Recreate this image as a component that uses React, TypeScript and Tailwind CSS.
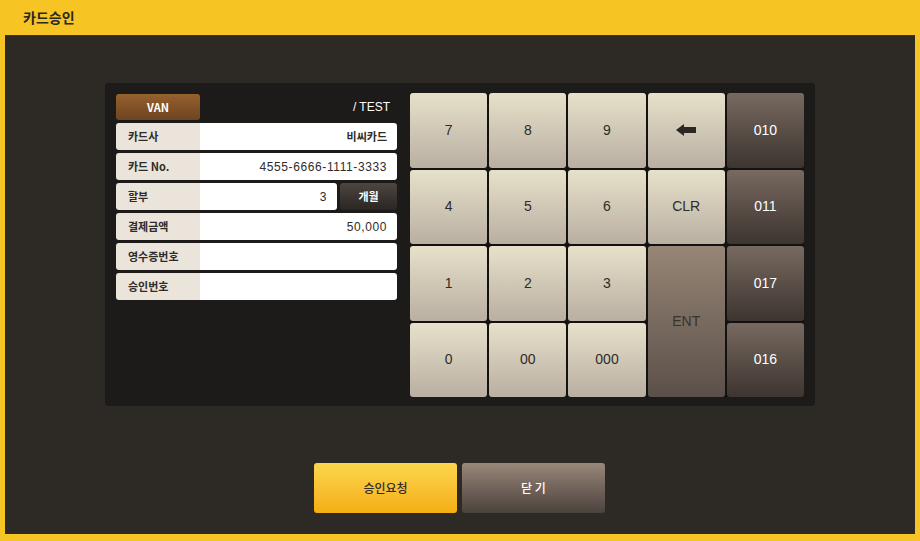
import React from "react"

const FONT = { fontFamily: '"Noto Sans CJK KR", "Noto Sans", sans-serif' }
const NUM = { fontFamily: '"Liberation Sans", "Noto Sans CJK KR", sans-serif' }

type Key = { label: React.ReactNode; kind: "light" | "dark" | "ent" }

const keys: Key[] = [
  { label: "7", kind: "light" },
  { label: "8", kind: "light" },
  { label: "9", kind: "light" },
  {
    label: (
      <svg width="20" height="12" viewBox="0 0 20 12">
        <polygon points="0,6 8,0 8,3 20,3 20,9 8,9 8,12" fill="#2b2724" />
      </svg>
    ),
    kind: "light",
  },
  { label: "010", kind: "dark" },
  { label: "4", kind: "light" },
  { label: "5", kind: "light" },
  { label: "6", kind: "light" },
  { label: "CLR", kind: "light" },
  { label: "011", kind: "dark" },
  { label: "1", kind: "light" },
  { label: "2", kind: "light" },
  { label: "3", kind: "light" },
  { label: "ENT", kind: "ent" },
  { label: "017", kind: "dark" },
  { label: "0", kind: "light" },
  { label: "00", kind: "light" },
  { label: "000", kind: "light" },
  { label: "016", kind: "dark" },
]

const keyStyle = {
  light: "bg-gradient-to-b from-[#e7e1c9] to-[#b9afa2] text-[#2f2b28]",
  dark: "bg-gradient-to-b from-[#786a60] to-[#3d3530] text-white",
  ent: "bg-gradient-to-b from-[#978676] to-[#5b5049] text-[#38322e] row-span-2",
}

const rows = [
  { label: "카드사", value: "비씨카드" },
  { label: "카드 No.", value: "4555-6666-1111-3333" },
  { label: "할부", value: "3", unit: true },
  { label: "결제금액", value: "50,000" },
  { label: "영수증번호", value: "" },
  { label: "승인번호", value: "" },
]

export default function App() {
  return (
    <div className="w-[920px] h-[541px] bg-[#f7c523] flex flex-col" style={FONT}>
      {/* HEADER */}
      <div className="h-[35px] flex items-center pl-[23px] text-[14px] font-bold text-[#2a2621]">
        카드승인
      </div>

      {/* BODY */}
      <div className="mx-[5px] h-[499px] bg-[#2d2a26] flex flex-col items-center border-t border-[#3a352c]">
        <div className="mt-[47px] w-[710px] h-[323px] bg-[#1d1b19] rounded-[3px] flex gap-[13px] pl-[11px] pt-[10px]">
          {/* LEFT FORM */}
          <div className="w-[281px] flex flex-col gap-[3px]">
            <div className="h-[26px] mt-[1px] flex items-center justify-between">
              <div className="w-[84px] h-[26px] rounded-[3px] bg-gradient-to-b from-[#96612f] to-[#6e4420] text-white text-[11px] font-bold flex items-center justify-center">
                VAN
              </div>
              <span className="text-[12px] text-white pr-[7px]" style={NUM}>/ TEST</span>
            </div>
            {rows.map((r) => {
              const numeric = /^[\d,-]+$/.test(r.value)
              return (
                <div key={r.label} className="h-[27px] flex gap-[3px]">
                  <div className="flex-1 flex rounded-[3px] overflow-hidden">
                    <div className="w-[84px] bg-[#ebe4da] text-[11px] font-semibold text-[#2f2b28] flex items-center pl-[12px]">
                      {r.label}
                    </div>
                    <div
                      className={`flex-1 bg-white text-[#2f2b28] flex items-center justify-end pr-[10px] ${
                        numeric ? "text-[12px] tracking-[0.6px]" : "text-[11px] font-semibold"
                      }`}
                      style={numeric ? NUM : undefined}
                    >
                      {r.value}
                    </div>
                  </div>
                  {r.unit && (
                    <div className="w-[57px] rounded-[3px] bg-gradient-to-b from-[#4d4540] to-[#2b2623] text-white text-[11px] font-semibold flex items-center justify-center">
                      개월
                    </div>
                  )}
                </div>
              )
            })}
          </div>

          {/* KEYPAD */}
          <div className="w-[394px] h-[304px] bg-[#141210] grid grid-cols-5 grid-rows-4 gap-[2px]">
            {keys.map((k, i) => (
              <div
                key={i}
                className={`rounded-[3px] flex items-center justify-center text-[14px] ${keyStyle[k.kind]}`}
                style={NUM}
              >
                {k.label}
              </div>
            ))}
          </div>
        </div>

        {/* ACTIONS */}
        <div className="mt-[57px] flex gap-[5px] ml-[-1px]">
          <button className="w-[143px] h-[50px] rounded-[3px] bg-gradient-to-b from-[#fcd64b] to-[#f4ae0f] text-[12px] font-medium text-[#2f2b28]">
            승인요청
          </button>
          <button className="w-[143px] h-[50px] rounded-[3px] bg-gradient-to-b from-[#9a887a] to-[#4c423d] text-[12px] font-medium text-white">
            닫 기
          </button>
        </div>
      </div>
    </div>
  )
}
